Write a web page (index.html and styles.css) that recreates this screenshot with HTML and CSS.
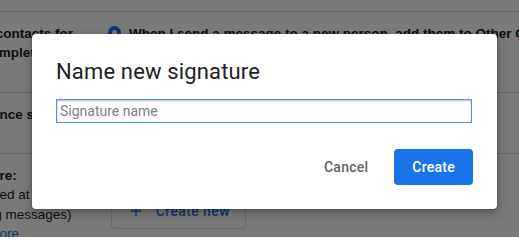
FILE: index.html
```html
<!DOCTYPE html>
<html lang="en">
<head>
<meta charset="utf-8">
<title>Name new signature</title>
<link rel="stylesheet" href="styles.css">
</head>
<body>
<div class="screen">
  <div class="page">
    <div class="row row-contacts">
      <div class="label"><b>Create contacts for <span class="nowrap">auto-complete:</span></b></div>
      <div class="value">
        <div class="option">
          <svg class="radio" width="13" height="13" viewBox="0 0 13 13" aria-hidden="true"><circle cx="6.5" cy="6.5" r="6.5" fill="#1a73e8"/><circle cx="6.5" cy="6.5" r="2.5" fill="#fff"/></svg>
          <span class="option-text">When I send a message to a new person, add them to Other Contacts so that I can auto-complete to them next time</span>
        </div>
      </div>
    </div>
    <div class="row row-signals">
      <div class="label"><b>Importance signals for ads:</b></div>
      <div class="value"><span class="muted">Visit Ad Settings</span></div>
    </div>
    <div class="row row-signature">
      <div class="label">
        <b class="block">Signature:</b>
        <span class="block"><span class="nowrap">(appended at the end of all</span> outgoing messages)</span>
        <a class="link block" href="#">Learn more</a>
      </div>
      <div class="value">
        <button class="outline-btn" type="button">
          <svg class="plus" width="18" height="18" viewBox="0 0 24 24" aria-hidden="true"><path d="M19 13h-6v6h-2v-6H5v-2h6V5h2v6h6v2z" fill="#1a73e8"/></svg>
          <span>Create new</span>
        </button>
      </div>
    </div>
  </div>

  <div class="scrim"></div>

  <div class="dialog" role="dialog" aria-labelledby="dlg-title">
    <h2 class="dialog-title" id="dlg-title">Name new signature</h2>
    <input class="name-input" type="text" placeholder="Signature name">
    <div class="dialog-actions">
      <button class="btn btn-text" type="button">Cancel</button>
      <button class="btn btn-primary" type="button">Create</button>
    </div>
  </div>
</div>
</body>
</html>
```

FILE: styles.css
```css
* { box-sizing: border-box; }

html, body {
  margin: 0;
  padding: 0;
  width: 519px;
  height: 237px;
  overflow: hidden;
  background: #fff;
  font-family: "Liberation Sans", Arial, sans-serif;
  font-size: 13.5px;
  line-height: 19.5px;
  color: #222;
}

.screen {
  position: relative;
  width: 519px;
  height: 237px;
  overflow: hidden;
}

.page {
  width: 519px;
  height: 237px;
  overflow: hidden;
  padding-top: 11px;
}

.row {
  display: flex;
  border-top: 1px solid #d6d6d6;
  padding-top: 11.5px;
}

.row-contacts { height: 81px; }
.row-signals { height: 61px; }
.row-signature { height: 84px; }

.label {
  flex: 0 0 158px;
  margin-left: -50px;
}

.label b { font-weight: 700; }
.block { display: block; }
.nowrap { white-space: nowrap; }

.link {
  color: #1a73e8;
  text-decoration: none;
}

.value {
  flex: 1 1 auto;
  min-width: 0;
  overflow: hidden;
}

.option {
  display: flex;
  align-items: flex-start;
  gap: 8px;
}

.radio {
  flex: 0 0 13px;
  margin-top: 2.5px;
}

.option-text {
  font-weight: 700;
  white-space: nowrap;
}

.muted { color: #222; }

.outline-btn {
  display: flex;
  align-items: center;
  height: 36px;
  margin-top: 27.5px;
  padding: 0 15px;
  border: 1px solid #dadce0;
  border-radius: 4px;
  background: #fff;
  color: #1a73e8;
  font-family: Roboto, "Liberation Sans", Arial, sans-serif;
  font-size: 14px;
  font-weight: 500;
  letter-spacing: .4px;
}

.plus { margin-right: 11px; }

.scrim {
  position: absolute;
  inset: 0;
  background: rgba(0, 0, 0, .52);
}

.dialog {
  position: absolute;
  left: 32px;
  top: 34px;
  width: 465px;
  height: 175px;
  padding: 24px;
  background: #fff;
  border-radius: 4px;
  box-shadow: 0 1px 3px rgba(0, 0, 0, .3), 0 4px 8px 3px rgba(0, 0, 0, .15);
  display: flex;
  flex-direction: column;
}

.dialog-title {
  margin: 0;
  font-family: Roboto, "Liberation Sans", Arial, sans-serif;
  font-size: 22px;
  line-height: 28px;
  font-weight: 400;
  letter-spacing: 0.15px;
  color: #202124;
}

.name-input {
  margin-top: 13px;
  width: 416px;
  height: 24px;
  padding: 0 3px;
  border: 1px solid #4d90fe;
  border-radius: 0;
  box-shadow: inset 0 1px 2px rgba(0, 0, 0, .25);
  outline: none;
  font-family: Roboto, "Liberation Sans", Arial, sans-serif;
  font-size: 14px;
  color: #222;
}

.name-input::placeholder { color: #808080; }

.dialog-actions {
  margin-top: 26px;
  display: flex;
  justify-content: flex-end;
  gap: 8px;
}

.btn {
  height: 36px;
  padding: 0 18px;
  border: 0;
  border-radius: 4px;
  font-family: Roboto, "Liberation Sans", Arial, sans-serif;
  font-size: 14px;
  font-weight: 500;
  letter-spacing: .25px;
}

.btn-text {
  background: transparent;
  color: #5f6368;
}

.btn-primary {
  background: #1a73e8;
  color: #fff;
}
```
